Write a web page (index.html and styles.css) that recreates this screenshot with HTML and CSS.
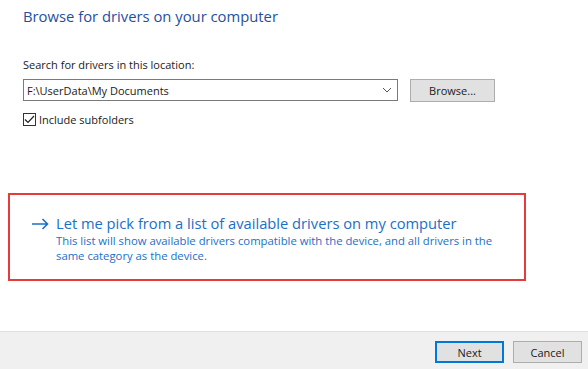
FILE: index.html
```html
<!DOCTYPE html>
<html lang="en">
<head>
    <meta charset="UTF-8">
    <title>Update Drivers</title>
    <link rel="stylesheet" href="styles.css">
</head>
<body>
    <div class="wizard">
        <div class="content">
            <h1 class="title">Browse for drivers on your computer</h1>

            <p class="label">Search for drivers in this location:</p>
            <div class="path-row">
                <div class="combo">
                    <span class="combo-value">F:\UserData\My Documents</span>
                    <svg class="chevron" width="10" height="6" viewBox="0 0 10 6">
                        <path d="M1 1 L5 5 L9 1" fill="none" stroke="#555" stroke-width="1"/>
                    </svg>
                </div>
                <button class="btn browse">Browse...</button>
            </div>

            <label class="check">
                <span class="box">
                    <svg width="11" height="9" viewBox="0 0 11 9">
                        <path d="M1 4.5 L4 7.5 L10 1" fill="none" stroke="#222" stroke-width="1.2"/>
                    </svg>
                </span>
                Include subfolders
            </label>
        </div>

        <!-- highlighted option -->
        <div class="pick-box">
            <div class="pick">
                <svg class="arrow" width="18" height="12" viewBox="0 0 18 12">
                    <path d="M1 6 H16.5 M11.5 1 L16.5 6 L11.5 11" fill="none" stroke="#1a6fc9" stroke-width="1.6"/>
                </svg>
                <div class="pick-text">
                    <div class="pick-title">Let me pick from a list of available drivers on my computer</div>
                    <div class="pick-desc">This list will show available drivers compatible with the device, and all drivers in the same category as the device.</div>
                </div>
            </div>
        </div>

        <div class="footer">
            <button class="btn next">Next</button>
            <button class="btn">Cancel</button>
        </div>
    </div>
</body>
</html>
```

FILE: styles.css
```css
* {
    margin: 0;
    padding: 0;
    box-sizing: border-box;
}
body {
    font-family: 'Open Sans', 'Noto Sans', sans-serif;
    background: #fff;
    color: #1a1a1a;
}
.wizard {
    width: 588px;
    height: 369px;
    display: flex;
    flex-direction: column;
}
.content {
    padding: 6px 0 0 23px;
}
.title {
    font-size: 14.8px;
    font-weight: normal;
    line-height: 20px;
    color: #1f4f9f;
}
.label {
    margin-top: 31px;
    font-size: 11px;
    line-height: 16px;
}
.path-row {
    display: flex;
    align-items: flex-start;
    gap: 12px;
    margin-top: 6px;
}
.combo {
    width: 375px;
    height: 22px;
    border: 1px solid #7a7a7a;
    display: flex;
    align-items: center;
    justify-content: space-between;
    padding: 0 5px 0 3px;
    font-size: 11px;
}
.btn {
    font-family: inherit;
    font-size: 11px;
    color: #1a1a1a;
    background: #e1e1e1;
    border: 1px solid #adadad;
    height: 22px;
    width: 69px;
}
.browse {
    width: 85px;
    height: 23px;
}
.check {
    display: flex;
    align-items: center;
    gap: 3px;
    margin-top: 10px;
    font-size: 11px;
}
.box {
    width: 13px;
    height: 13px;
    border: 1px solid #333;
    display: flex;
    align-items: center;
    justify-content: center;
}
.pick-box {
    margin: 66px 0 0 8px;
    width: 518px;
    height: 88px;
    border: 2px solid #e53b3b;
    padding: 18px 0 0 21px;
}
.pick {
    display: flex;
    align-items: flex-start;
    gap: 7px;
    color: #1a6fc9;
}
.arrow {
    margin-top: 5px;
}
.pick-title {
    font-size: 14.7px;
    line-height: 20px;
}
.pick-desc {
    font-size: 11.3px;
    line-height: 15px;
    width: 445px;
}
.footer {
    margin-top: auto;
    height: 38px;
    background: #f0f0f0;
    border-top: 1px solid #dfdfdf;
    display: flex;
    justify-content: flex-end;
    align-items: flex-start;
    gap: 9px;
    padding: 9px 6px 0 0;
}
.next {
    border: 2px solid #0078d7;
}
```
